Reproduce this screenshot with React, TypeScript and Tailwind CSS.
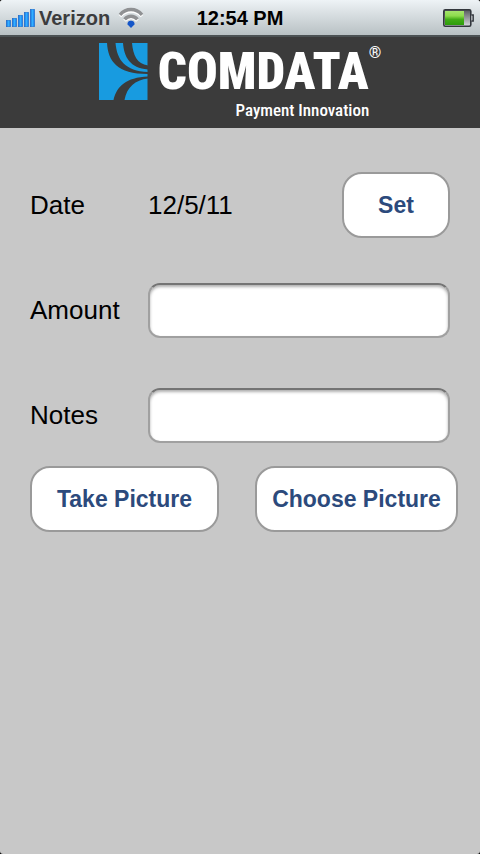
import React, { useState } from "react";

const bars = [
  { x: 0, y: 11 },
  { x: 6, y: 9 },
  { x: 12, y: 6 },
  { x: 18, y: 3 },
  { x: 24, y: 0 },
];

function Signal() {
  return (
    <svg width="29" height="18" viewBox="0 0 29 18" aria-hidden="true">
      <defs>
        <linearGradient id="signal" x1="0" y1="0" x2="1" y2="0">
          <stop offset="0" stopColor="#0f6ce0" />
          <stop offset="0.5" stopColor="#35b0ff" />
          <stop offset="1" stopColor="#0f74ea" />
        </linearGradient>
      </defs>
      {bars.map((bar) => (
        <rect
          key={bar.x}
          x={bar.x + 0.2}
          y={bar.y + 0.2}
          width="4.5"
          height={17.6 - bar.y}
          fill="url(#signal)"
          stroke="#1a5cb8"
          strokeWidth="0.4"
        />
      ))}
    </svg>
  );
}

function Wifi() {
  return (
    <svg width="26" height="22" viewBox="0 0 26 22" aria-hidden="true">
      <g fill="none" strokeWidth="3.4">
        <path d="M2 9.2C8 2.2 18 2.2 24 9.2" stroke="#fff" />
        <path d="M6.6 13.6C10.2 9.4 15.8 9.4 19.4 13.6" stroke="#fff" />
        <path d="M2 7.8C8 0.8 18 0.8 24 7.8" stroke="#8f9193" />
        <path d="M6.6 12.4C10.2 8.2 15.8 8.2 19.4 12.4" stroke="#8f9193" />
      </g>
      <path
        d="M13 21L9.6 17.6C9 15.4 10.8 13.8 13 13.8S17 15.4 16.4 17.6Z"
        fill="#1556c8"
      />
    </svg>
  );
}

function Battery() {
  return (
    <svg width="31" height="18" viewBox="0 0 31 18" aria-hidden="true">
      <defs>
        <linearGradient id="charge" x1="0" y1="0" x2="0" y2="1">
          <stop offset="0" stopColor="#a5e46c" />
          <stop offset="0.35" stopColor="#8ddc4c" />
          <stop offset="0.6" stopColor="#42ac17" />
          <stop offset="1" stopColor="#2d9c0b" />
        </linearGradient>
        <linearGradient id="empty" x1="0" y1="0" x2="0" y2="1">
          <stop offset="0" stopColor="#55585c" />
          <stop offset="1" stopColor="#d8dade" />
        </linearGradient>
      </defs>
      <rect x="0.8" y="0.8" width="27" height="16.4" rx="1.5" fill="url(#empty)" stroke="#33373d" strokeWidth="1.6" />
      <rect x="2" y="2" width="19" height="14" fill="url(#charge)" />
      <path d="M28.4 6H30.2V12H28.4" fill="#c8ccd0" stroke="#33373d" strokeWidth="1.4" />
    </svg>
  );
}

function LogoMark() {
  return (
    <svg width="49" height="57" viewBox="0 0 49 57" aria-hidden="true">
      <path d="M0 0H48.5V57H0Z" fill="#189be0" />
      <g fill="#3b3b3b">
        <path d="M8 0C9 18 18 31 49 31V29C26 28 18 17 16.5 0Z" />
        <path d="M24 0C25 14 31 25 49 26.5V22.5C38 21 34 12 33 0Z" />
        <path d="M14.5 57C18 43 27 34.5 49 33.5V35.5C36 37 28 44 25.5 57Z" />
      </g>
    </svg>
  );
}

const fields = [
  { id: "amount", label: "Amount" },
  { id: "notes", label: "Notes" },
];

const buttonStyle =
  "h-[66px] rounded-[20px] border-2 border-[#9a9a9a] bg-white text-[23px] font-bold text-[#2c4a7c]";

export default function App() {
  const [values, setValues] = useState<Record<string, string>>({
    amount: "",
    notes: "",
  });

  return (
    <div className="bg-black">
      <div className="min-h-screen overflow-hidden rounded-[3px] bg-[#c8c8c8] font-['Liberation_Sans',Arial,sans-serif] text-black">
        <div className="grid h-[35px] grid-cols-[1fr_auto_1fr] items-center bg-linear-to-b from-[#eef3f6] to-[#b9c1c4] px-[6px] text-[20px] font-bold">
          <div className="flex items-center gap-1 text-[#3c3c3e]">
            <Signal />
            <span className="mr-1">Verizon</span>
            <Wifi />
          </div>
          <span>12:54 PM</span>
          <div className="flex justify-end">
            <Battery />
          </div>
        </div>

        <header className="flex h-[93px] justify-center gap-[10px] border-t-2 border-[#4c5254] bg-[#3b3b3b] pt-[6px] font-['Roboto_Condensed',Roboto,sans-serif] text-white">
          <LogoMark />
          <div>
            <div className="flex items-start">
              <span className="text-[51px] leading-[58px] font-black">
                COMDATA
              </span>
              <span className="text-[16px] leading-[20px]">®</span>
            </div>
            <p className="pr-3 text-right text-[17px] leading-[18px] font-medium">
              Payment Innovation
            </p>
          </div>
        </header>

        <main className="pt-11 pr-[22px] pl-[30px] text-[26px]">
          <div className="mr-2 flex items-center">
            <span className="w-[118px]">Date</span>
            <span className="flex-1">12/5/11</span>
            <button type="button" className={`${buttonStyle} w-[108px]`}>
              Set
            </button>
          </div>

          <div className="mt-[45px] mr-2 flex flex-col gap-[50px]">
            {fields.map((field) => (
              <div className="flex items-center" key={field.id}>
                <label htmlFor={field.id} className="w-[118px]">
                  {field.label}
                </label>
                <input
                  id={field.id}
                  type="text"
                  value={values[field.id]}
                  onChange={(e) =>
                    setValues({ ...values, [field.id]: e.target.value })
                  }
                  className="h-[55px] min-w-0 flex-1 rounded-xl border-2 border-[#a0a0a0] border-t-[#747474] bg-white px-3 shadow-[inset_0_2px_3px_#b0b0b0]"
                />
              </div>
            ))}
          </div>

          <div className="mt-[23px] grid grid-cols-[189fr_203fr] gap-9">
            <button type="button" className={buttonStyle}>
              Take Picture
            </button>
            <button type="button" className={buttonStyle}>
              Choose Picture
            </button>
          </div>
        </main>
      </div>
    </div>
  );
}
